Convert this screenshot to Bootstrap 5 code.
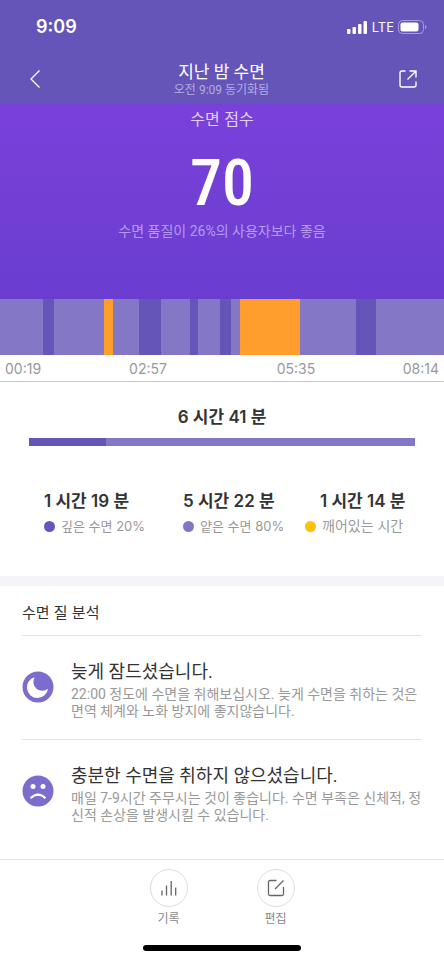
<!DOCTYPE html>
<html lang="ko">
<head>
<meta charset="utf-8">
<meta name="viewport" content="width=device-width, initial-scale=1">
<title>지난 밤 수면</title>
<link href="https://cdn.jsdelivr.net/npm/bootstrap@5.3.0/dist/css/bootstrap.min.css" rel="stylesheet">
<style>
  :root { --deep: #6655b9; --light: #8477c6; --awake: #ff9d2d; --ink: #333; --soft: #999; }
  body { font-family: Inter, "Noto Sans CJK KR", sans-serif; color: var(--ink); background: #fff; }
  .page-title, .sync, .score-note, .tip-title, .tip-text { font-family: Roboto, "Noto Sans CJK KR", sans-serif; }
  .icon-btn { width: 40px; height: 40px; padding: 0; border: 0; }
  .app-header { background: var(--deep); height: 104px; }
  .status-bar { height: 54px; padding: 0 17px 0 36px; }
  .clock { font-size: 18px; line-height: 24px; }
  .network { font-size: 13px; line-height: 16px; }
  .title-bar { height: 50px; padding: 0 16px 0 15px; }
  .page-title { font-size: 17px; line-height: 22px; }
  .sync { font-size: 12px; line-height: 14px; color: #b5abe0; }
  .score-panel { height: 195px; background: linear-gradient(#7a41da, #6a3dd0); padding-top: 3px; }
  .score-label { font-size: 16px; line-height: 24px; color: #e0d2f8; }
  .score-value { font-size: 64px; line-height: 80px; font-weight: 500; font-family: "Noto Sans ExtraCondensed", "Open Sans ExtraCondensed", "Roboto Condensed", "Open Sans Condensed", "Noto Sans Condensed", "Liberation Sans Narrow", sans-serif; margin-top: 13px; }
  .score-note { font-size: 14px; line-height: 20px; color: #b89aea; margin-top: -3px; }
  .timeline { height: 56px; background: var(--light); }
  .seg { flex: 0 1 0; }
  .deep { background: var(--deep); }
  .lightly { background: var(--light); }
  .awake { background: var(--awake); }
  .times { height: 27px; padding-top: 4px; font-size: 14px; line-height: 20px; color: var(--soft); border-bottom: 1px solid #c8c8c8; }
  .edge-start { padding-left: 5px; }
  .edge-end { padding-right: 5px; }
  .total { font-size: 17px; line-height: 24px; margin-top: 23px; }
  .split-bar { height: 8px; margin: 9px 29px 0; }
  .stats { display: grid; grid-template-columns: 139fr 122fr 139fr; padding-left: 44px; margin-top: 43px; margin-bottom: 40px; }
  .stat-value { font-size: 17px; line-height: 24px; }
  .stat-note { font-size: 13px; line-height: 20px; color: var(--soft); gap: 6px; margin-top: 3px; }
  .stat-wide { font-size: 14px; }
  .indent { padding-left: 15px; }
  .bullet { width: 11px; height: 11px; border-radius: 50%; flex: none; }
  .yellow { background: #ffc107; }
  .band { height: 10px; background: #f5f5f9; }
  .analysis { padding: 0 22px; }
  .section-title { font-size: 15px; line-height: 24px; padding: 15px 0 10px; border-bottom: 1px solid #e2e2e2; }
  .tip { padding: 22px 0 19px; }
  .tip + .tip { border-top: 1px solid #e2e2e2; }
  .tip-title { font-size: 18px; line-height: 28px; }
  .tip-text { font-size: 14px; line-height: 17px; color: var(--soft); word-break: break-all; }
  .tip-icon { width: 32px; height: 32px; flex: none; margin: 13px 17px 0 0; }
  .bottom-bar { border-top: 1px solid #e4e4e4; padding-top: 9px; margin-top: 16px; gap: 67px; }
  .tool { font-size: 12px; line-height: 16px; color: #888; width: 40px; }
  .ring { width: 38px; height: 38px; border: 1px solid #ddd; border-radius: 50%; margin-bottom: 4px; }
  .home { width: 158px; height: 6px; border-radius: 3px; background: #000; margin: 18px auto 9px; }
</style>
</head>
<body>
<header class="app-header text-white">
  <div class="status-bar d-flex align-items-center justify-content-between">
    <span class="clock fw-semibold">9:09</span>
    <div class="d-flex align-items-center gap-1">
      <svg width="21" height="13" viewBox="0 0 21 13" fill="#fff" aria-hidden="true"><rect x="0" y="8" width="3.500" height="5" rx="1"/><rect x="5.500" y="6" width="3.500" height="7" rx="1"/><rect x="11" y="3" width="3.500" height="10" rx="1"/><rect x="16.500" y="0" width="3.500" height="13" rx="1"/></svg>
      <span class="network">LTE</span>
      <svg width="29" height="14" viewBox="0 0 29 14" aria-hidden="true"><rect x=".5" y=".5" width="25" height="13" rx="4" fill="none" stroke="#a79cdb"/><rect x="2.500" y="2.500" width="18" height="9" rx="2" fill="#fff"/><path d="M27 5v4q1.500-.5 1.500-2T27 5" fill="#a79cdb"/></svg>
    </div>
  </div>
  <div class="title-bar d-flex align-items-center justify-content-between">
    <button class="btn icon-btn d-flex align-items-center justify-content-center" aria-label="뒤로"><svg width="12" height="20" viewBox="0 0 12 20" fill="none" stroke="#fff" stroke-width="1.300" aria-hidden="true"><path d="M10.500 1.500 2 10l8.500 8.500"/></svg></button>
    <div class="text-center">
      <h1 class="page-title fw-normal mb-0">지난 밤 수면</h1>
      <div class="sync">오전 9:09 동기화됨</div>
    </div>
    <button class="btn icon-btn d-flex align-items-center justify-content-center" aria-label="공유"><svg width="20" height="20" viewBox="0 0 20 20" fill="none" stroke="#fff" stroke-width="1.400" aria-hidden="true"><path d="M7.500 2H4a2 2 0 0 0-2 2v12a2 2 0 0 0 2 2h12a2 2 0 0 0 2-2v-3.500M9.500 10.500 18 2M11.500 2H18v6.500"/></svg></button>
  </div>
</header>
<main>
  <section class="score-panel text-center">
    <h2 class="score-label fw-normal mb-0">수면 점수</h2>
    <div class="score-value text-white">70</div>
    <p class="score-note mb-0">수면 품질이 26%의 사용자보다 좋음</p>
  </section>
  <div class="timeline d-flex">
    <div class="seg lightly" style="flex-grow:43"></div>
    <div class="seg deep" style="flex-grow:11"></div>
    <div class="seg lightly" style="flex-grow:50"></div>
    <div class="seg awake" style="flex-grow:9"></div>
    <div class="seg lightly" style="flex-grow:26"></div>
    <div class="seg deep" style="flex-grow:22"></div>
    <div class="seg lightly" style="flex-grow:29"></div>
    <div class="seg deep" style="flex-grow:8"></div>
    <div class="seg lightly" style="flex-grow:22"></div>
    <div class="seg deep" style="flex-grow:11"></div>
    <div class="seg lightly" style="flex-grow:9"></div>
    <div class="seg awake" style="flex-grow:60"></div>
    <div class="seg lightly" style="flex-grow:56"></div>
    <div class="seg deep" style="flex-grow:20"></div>
    <div class="seg lightly" style="flex-grow:68"></div>
  </div>
  <div class="times d-flex">
    <span class="col-2 edge-start">00:19</span>
    <span class="col-4 text-center">02:57</span>
    <span class="col-4 text-center">05:35</span>
    <span class="col-2 edge-end text-end">08:14</span>
  </div>
  <section>
    <h2 class="total fw-semibold text-center mb-0">6 시간 41 분</h2>
    <div class="split-bar d-flex">
      <div class="deep" style="width:20%"></div>
      <div class="lightly" style="width:80%"></div>
    </div>
    <div class="stats text-nowrap">
      <div>
        <div class="stat-value fw-semibold">1 시간 19 분</div>
        <div class="stat-note d-flex align-items-center"><span class="bullet deep"></span>깊은 수면 20%</div>
      </div>
      <div>
        <div class="stat-value fw-semibold">5 시간 22 분</div>
        <div class="stat-note d-flex align-items-center"><span class="bullet lightly"></span>얕은 수면 80%</div>
      </div>
      <div>
        <div class="stat-value fw-semibold indent">1 시간 14 분</div>
        <div class="stat-note stat-wide d-flex align-items-center"><span class="bullet yellow"></span>깨어있는 시간</div>
      </div>
    </div>
  </section>
  <div class="band"></div>
  <section class="analysis">
    <h2 class="section-title fw-normal mb-0">수면 질 분석</h2>
    <article class="tip d-flex align-items-start">
      <svg class="tip-icon" viewBox="0 0 32 32" aria-hidden="true"><circle cx="16" cy="16" r="15.500" fill="#7c6ccd"/><path d="M12.700 6.200A10.600 10.600 0 1 0 26 17.700 8.900 8.900 0 0 1 12.700 6.200Z" fill="#fff"/></svg>
      <div>
        <h3 class="tip-title fw-normal mb-0">늦게 잠드셨습니다.</h3>
        <p class="tip-text mb-0">22:00 정도에 수면을 취해보십시오. 늦게 수면을 취하는 것은 면역 체계와 노화 방지에 좋지않습니다.</p>
      </div>
    </article>
    <article class="tip d-flex align-items-start">
      <svg class="tip-icon" viewBox="0 0 32 32" aria-hidden="true"><circle cx="16" cy="16" r="15.500" fill="#7c6ccd"/><circle cx="11" cy="11.500" r="2.500" fill="#fff"/><circle cx="21" cy="11.500" r="2.500" fill="#fff"/><path d="M8.500 23.200Q16 16 23.500 23.200" fill="none" stroke="#fff" stroke-width="2"/></svg>
      <div>
        <h3 class="tip-title fw-normal mb-0">충분한 수면을 취하지 않으셨습니다.</h3>
        <p class="tip-text mb-0">매일 7-9시간 주무시는 것이 좋습니다. 수면 부족은 신체적, 정신적 손상을 발생시킬 수 있습니다.</p>
      </div>
    </article>
  </section>
</main>
<footer>
  <nav class="bottom-bar d-flex justify-content-center">
    <button class="btn tool p-0 border-0 d-flex flex-column align-items-center"><span class="ring d-flex align-items-center justify-content-center"><svg width="18" height="18" viewBox="0 0 18 18" fill="none" stroke="#666" stroke-width="1.300" aria-hidden="true"><path d="M2 11.500v5M6.500 6.500v10M11.200 2v14.500M15.700 8.500v8"/></svg></span>기록</button>
    <button class="btn tool p-0 border-0 d-flex flex-column align-items-center"><span class="ring d-flex align-items-center justify-content-center"><svg width="18" height="18" viewBox="0 0 18 18" fill="none" stroke="#666" stroke-width="1.300" aria-hidden="true"><path d="M9.500 1.500H3A1.500 1.500 0 0 0 1.500 3v12A1.500 1.500 0 0 0 3 16.500h12a1.500 1.500 0 0 0 1.500-1.500V8M8 10l8.500-8.500"/></svg></span>편집</button>
  </nav>
  <div class="home"></div>
</footer>
<script src="https://cdn.jsdelivr.net/npm/bootstrap@5.3.0/dist/js/bootstrap.bundle.min.js"></script>
</body>
</html>
